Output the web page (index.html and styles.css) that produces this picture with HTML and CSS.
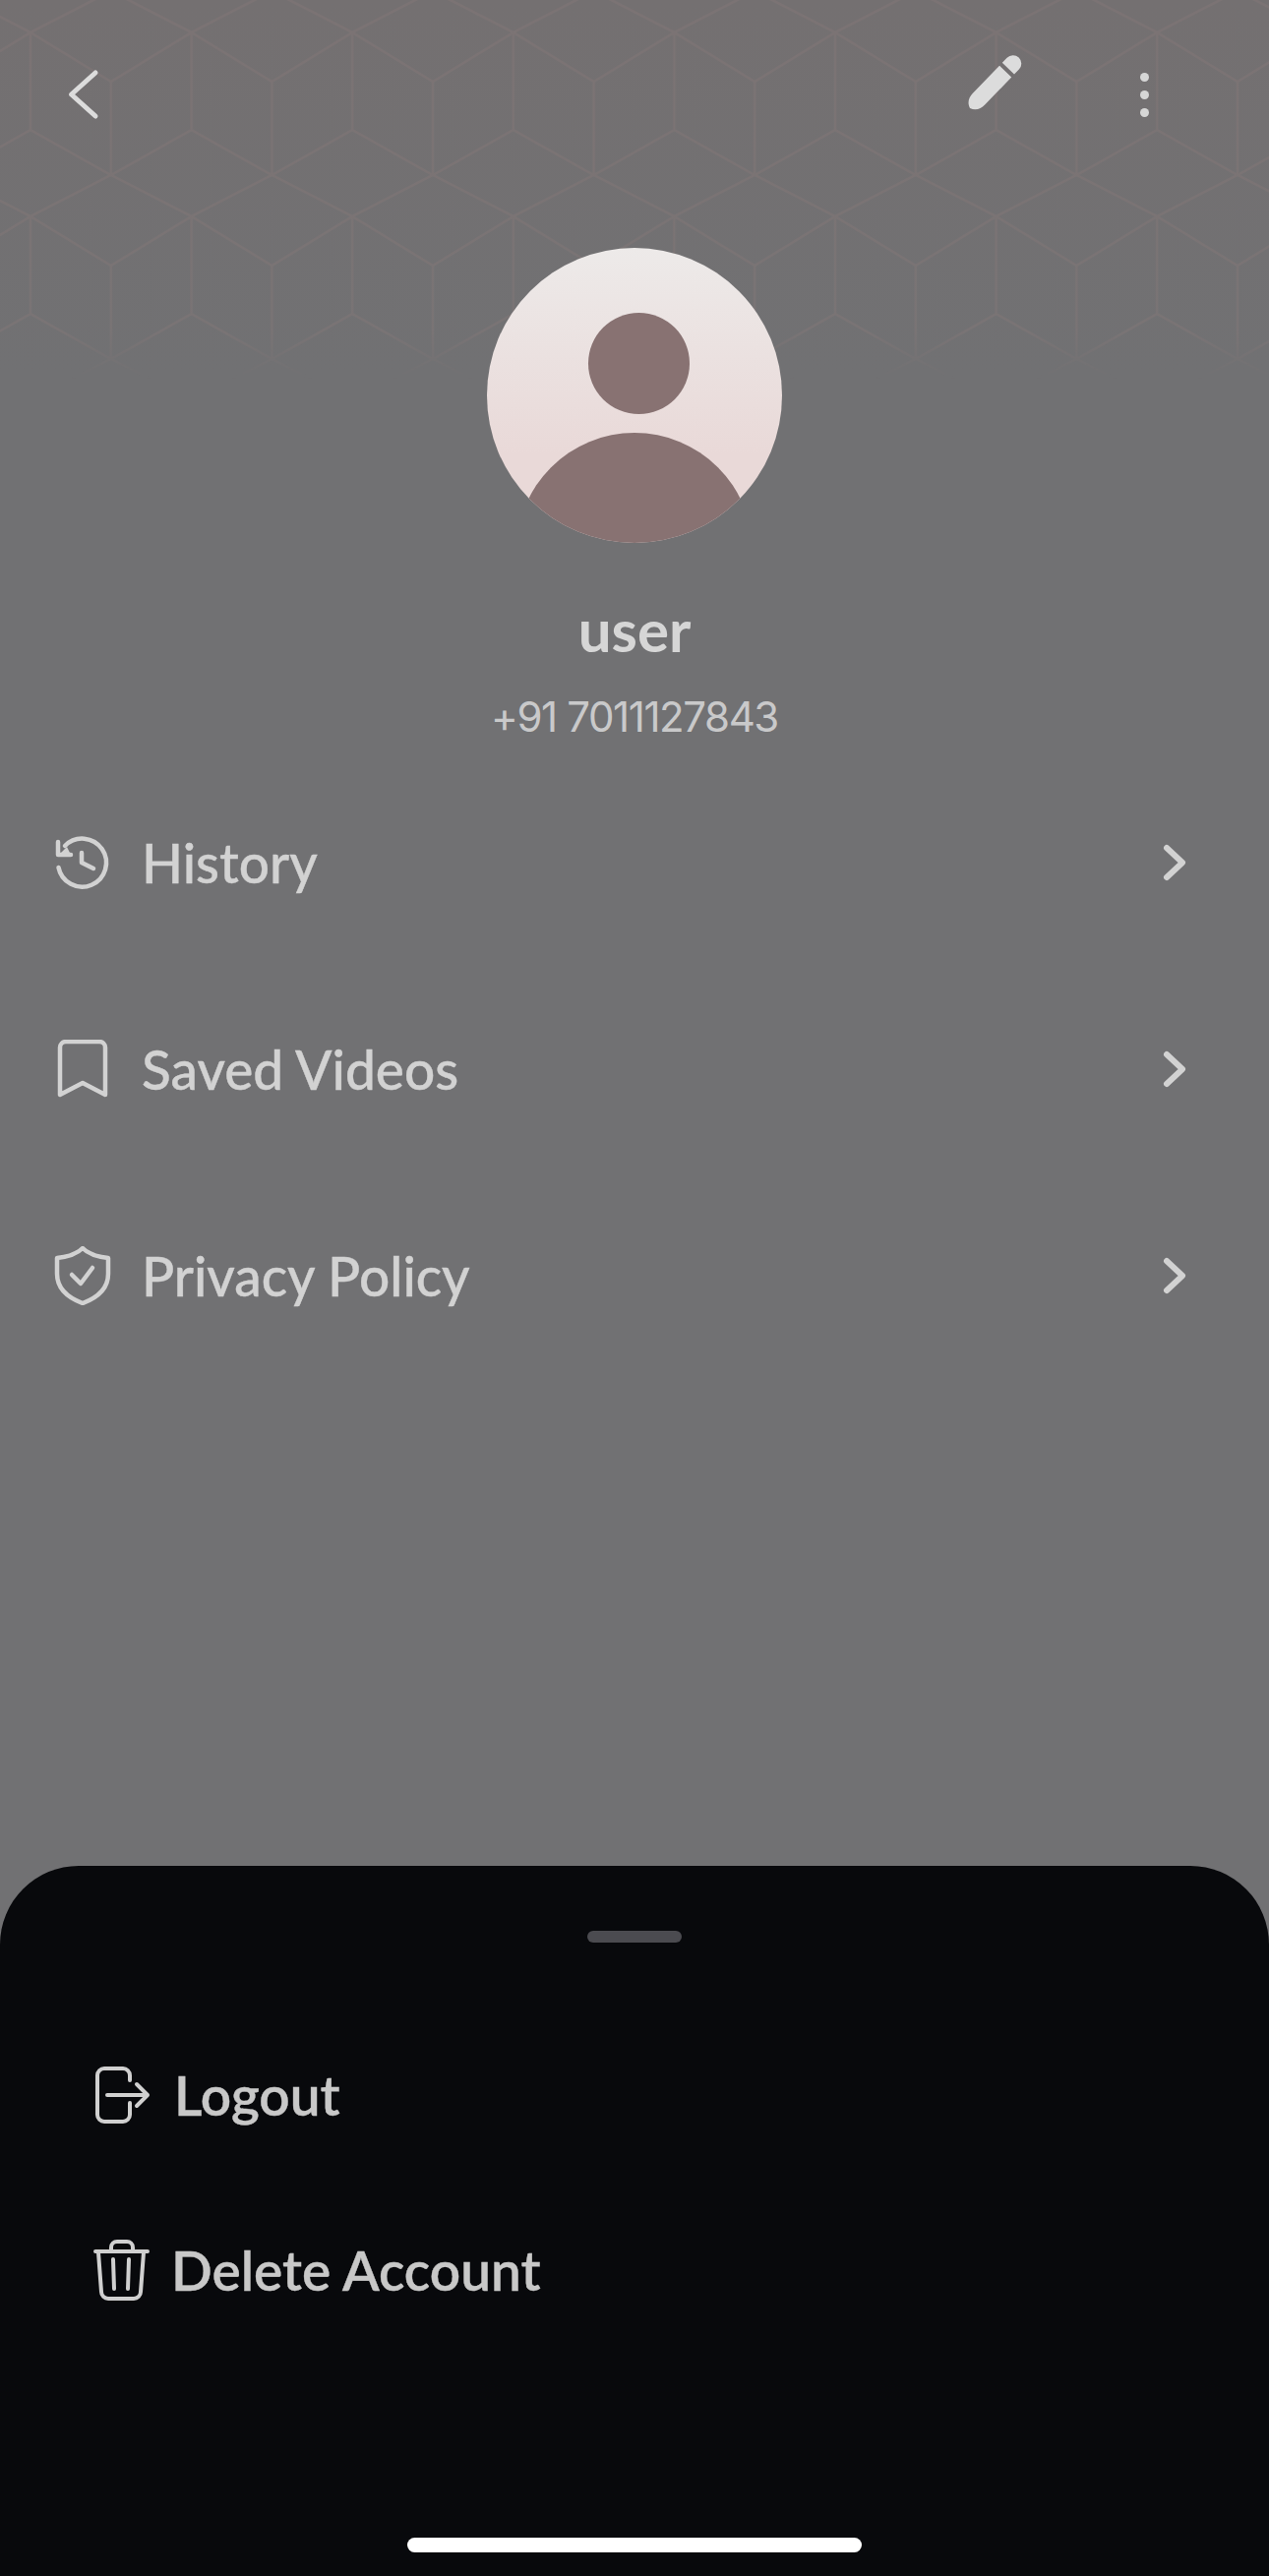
FILE: index.html
```html
<!DOCTYPE html>
<html lang="en">
<head>
    <meta charset="UTF-8">
    <meta name="viewport" content="width=device-width, initial-scale=1.0">
    <title>Profile</title>
    <link rel="stylesheet" href="styles.css">
</head>
<body>
    <div class="screen">
        <!-- hex background -->
        <svg class="hex-bg" width="1290" height="390">
            <defs>
                <pattern id="hex" x="31" y="33" width="163.6" height="187" patternUnits="userSpaceOnUse">
                    <path d="M0 0L81.8 50L163.6 0M0 0V99M81.8 50V145M0 99L81.8 145L163.6 99M0 187L81.8 145L163.6 187M163.6 0V99" fill="none" stroke="#8a7a7a" stroke-width="2.5"/>
                </pattern>
            </defs>
            <rect width="1290" height="390" fill="url(#hex)"/>
        </svg>

        <!-- top bar -->
        <div class="topbar">
            <svg class="icon back-icon" viewBox="0 0 60 60">
                <path d="M43 8L18.500 30L43 52" class="stroke-light"/>
            </svg>
            <svg class="pencil-icon" viewBox="0 0 60 72">
                <g transform="translate(4 56) rotate(-46)" fill="#dcdcdc">
                    <path d="M0 0C2 -6 7 -8.500 13 -8.500H52V8.500H13C7 8.500 2 6 0 0Z"/>
                    <path d="M56 -8.500H63A8.500 8.500 0 0 1 63 8.500H56Z"/>
                </g>
            </svg>
            <div class="dots">
                <span></span>
                <span></span>
                <span></span>
            </div>
        </div>

        <!-- profile -->
        <div class="profile">
            <svg class="avatar" viewBox="0 0 300 300">
                <defs>
                    <linearGradient id="avatarBg" x1="0" y1="0" x2="0" y2="1">
                        <stop offset="0" stop-color="#edeae9"/>
                        <stop offset="0.7" stop-color="#e9d9d8"/>
                    </linearGradient>
                    <clipPath id="avatarClip">
                        <circle cx="150" cy="150" r="150"/>
                    </clipPath>
                </defs>
                <circle cx="150" cy="150" r="150" fill="url(#avatarBg)"/>
                <g clip-path="url(#avatarClip)" fill="#887272">
                    <circle cx="154.500" cy="117.500" r="51.500"/>
                    <circle cx="150" cy="308" r="120"/>
                </g>
            </svg>
            <div class="name">user</div>
            <div class="phone">+91 7011127843</div>
        </div>

        <!-- menu -->
        <div class="menu">
            <div class="menu-row">
                <svg class="icon" viewBox="0 0 60 60">
                    <path d="M5.500 35A24.500 24.500 0 1 0 12 13" class="stroke-mid"/>
                    <path d="M5 9V22H18" class="stroke-mid"/>
                    <path d="M6 22L14 14L18 22Z" fill="#d2d2d2"/>
                    <path d="M29 20V30L41 36" class="stroke-mid"/>
                </svg>
                <span class="menu-label">History</span>
                <svg class="chevron" viewBox="0 0 40 60">
                    <path d="M12 15L28 30L12 45"/>
                </svg>
            </div>
            <div class="menu-row">
                <svg class="icon" viewBox="0 0 60 60">
                    <path d="M7 8A6 6 0 0 1 13 2H47A6 6 0 0 1 53 8V56L30 44L7 56Z" class="stroke-mid"/>
                </svg>
                <span class="menu-label">Saved Videos</span>
                <svg class="chevron" viewBox="0 0 40 60">
                    <path d="M12 15L28 30L12 45"/>
                </svg>
            </div>
            <div class="menu-row">
                <svg class="icon" viewBox="0 0 60 60">
                    <path d="M30 2C36 8 46 11 56 12V28C56 42 46 52 30 58C14 52 4 42 4 28V12C14 11 24 8 30 2Z" class="stroke-mid"/>
                    <path d="M19 29L28 38L40 22" class="stroke-mid"/>
                </svg>
                <span class="menu-label">Privacy Policy</span>
                <svg class="chevron" viewBox="0 0 40 60">
                    <path d="M12 15L28 30L12 45"/>
                </svg>
            </div>
        </div>

        <!-- bottom sheet -->
        <div class="sheet">
            <div class="handle"></div>
            <div class="sheet-row logout-row">
                <svg class="sheet-icon logout-icon" viewBox="0 0 62 62">
                    <path d="M38 16V11A7 7 0 0 0 31 4H12A7 7 0 0 0 5 11V51A7 7 0 0 0 12 58H31A7 7 0 0 0 38 51V39"/>
                    <path d="M15 31H56M45 20L56 31L45 42"/>
                </svg>
                <span class="sheet-label">Logout</span>
            </div>
            <div class="sheet-row delete-row">
                <svg class="sheet-icon delete-icon" viewBox="0 0 59 64">
                    <path d="M3 13H56M19 13V9A6 6 0 0 1 25 3H35A6 6 0 0 1 41 9V13"/>
                    <path d="M6 14L9 54A7 7 0 0 0 16 61H42A7 7 0 0 0 49 54L52 14"/>
                    <path d="M21 21L22 51M37 21L36 51"/>
                </svg>
                <span class="sheet-label">Delete Account</span>
            </div>
            <div class="home-bar"></div>
        </div>
    </div>
</body>
</html>
```

FILE: styles.css
```css
/* page */
body {
    margin: 0;
    background-color: #717173;
    font-family: "Lato", "Noto Sans", sans-serif;
}

.screen {
    position: relative;
    display: flex;
    flex-direction: column;
    width: 1290px;
    height: 2619px;
    overflow: hidden;
    background: linear-gradient(#747071, #717173 380px);
}

/* hex background */
.hex-bg {
    position: absolute;
    top: 0;
    left: 0;
    -webkit-mask-image: linear-gradient(#000 335px, transparent 385px);
    mask-image: linear-gradient(#000 335px, transparent 385px);
    opacity: 0.35;
}

.icon {
    flex: none;
    width: 60px;
    height: 60px;
}

.stroke-light {
    fill: none;
    stroke: #dcdcdc;
    stroke-width: 5;
    stroke-linecap: round;
    stroke-linejoin: round;
}

.stroke-mid {
    fill: none;
    stroke: #d2d2d2;
    stroke-width: 4.5;
    stroke-linecap: round;
    stroke-linejoin: round;
}

/* top bar */
.topbar {
    position: relative;
    display: flex;
    align-items: center;
    height: 60px;
    padding: 66px 122px 0 54px;
}

.pencil-icon {
    flex: none;
    width: 60px;
    height: 72px;
    margin-left: auto;
    margin-right: 117px;
    margin-top: -12px;
}

.dots {
    display: flex;
    flex-direction: column;
    gap: 9px;
}

.dots span {
    width: 9px;
    height: 9px;
    border-radius: 50%;
    background-color: #d6d6d6;
}

/* profile */
.profile {
    position: relative;
    display: flex;
    flex-direction: column;
    align-items: center;
    margin-top: 126px;
}

.avatar {
    width: 300px;
    height: 300px;
}

.name {
    margin-top: 53px;
    font-size: 60px;
    line-height: 70px;
    font-weight: 700;
    color: #d6d6d6;
}

.phone {
    margin-top: 26px;
    font-family: "Inter", sans-serif;
    font-size: 42px;
    line-height: 56px;
    letter-spacing: -1.4px;
    color: #c9c9ca;
}

/* menu */
.menu {
    position: relative;
    margin-top: 15px;
    padding: 0 76px 0 54px;
}

.menu-row {
    display: flex;
    align-items: center;
    height: 210px;
}

.menu-label {
    margin-left: 30px;
    font-size: 55px;
    font-weight: 500;
    -webkit-text-stroke: 0.4px #d2d2d2;
    color: #d2d2d2;
}

.chevron {
    flex: none;
    width: 40px;
    height: 60px;
    margin-left: auto;
    fill: none;
    stroke: #d2d2d2;
    stroke-width: 6;
    stroke-linecap: round;
    stroke-linejoin: round;
}

/* bottom sheet */
.sheet {
    display: flex;
    flex-direction: column;
    margin-top: auto;
    height: 722px;
    padding-left: 94px;
    border-radius: 80px 80px 0 0;
    background-color: #08090c;
}

.handle {
    align-self: center;
    width: 96px;
    height: 12px;
    margin-top: 66px;
    margin-left: -94px;
    border-radius: 6px;
    background-color: #4b4b50;
}

.sheet-row {
    display: flex;
    align-items: center;
    gap: 21px;
}

.logout-row {
    margin-top: 122px;
}

.delete-row {
    margin-top: 112px;
}

.sheet-icon {
    flex: none;
    fill: none;
    stroke: #d0d0d0;
    stroke-width: 4;
    stroke-linecap: round;
    stroke-linejoin: round;
}

.logout-icon {
    width: 62px;
    height: 62px;
}

.delete-icon {
    width: 59px;
    height: 64px;
}

.sheet-label {
    font-size: 55px;
    font-weight: 600;
    -webkit-text-stroke: 0.4px #c8c8c8;
    color: #c8c8c8;
}

.home-bar {
    align-self: center;
    width: 462px;
    height: 15px;
    margin-top: auto;
    margin-bottom: 24px;
    margin-left: -94px;
    border-radius: 8px;
    background-color: #ffffff;
}
```
